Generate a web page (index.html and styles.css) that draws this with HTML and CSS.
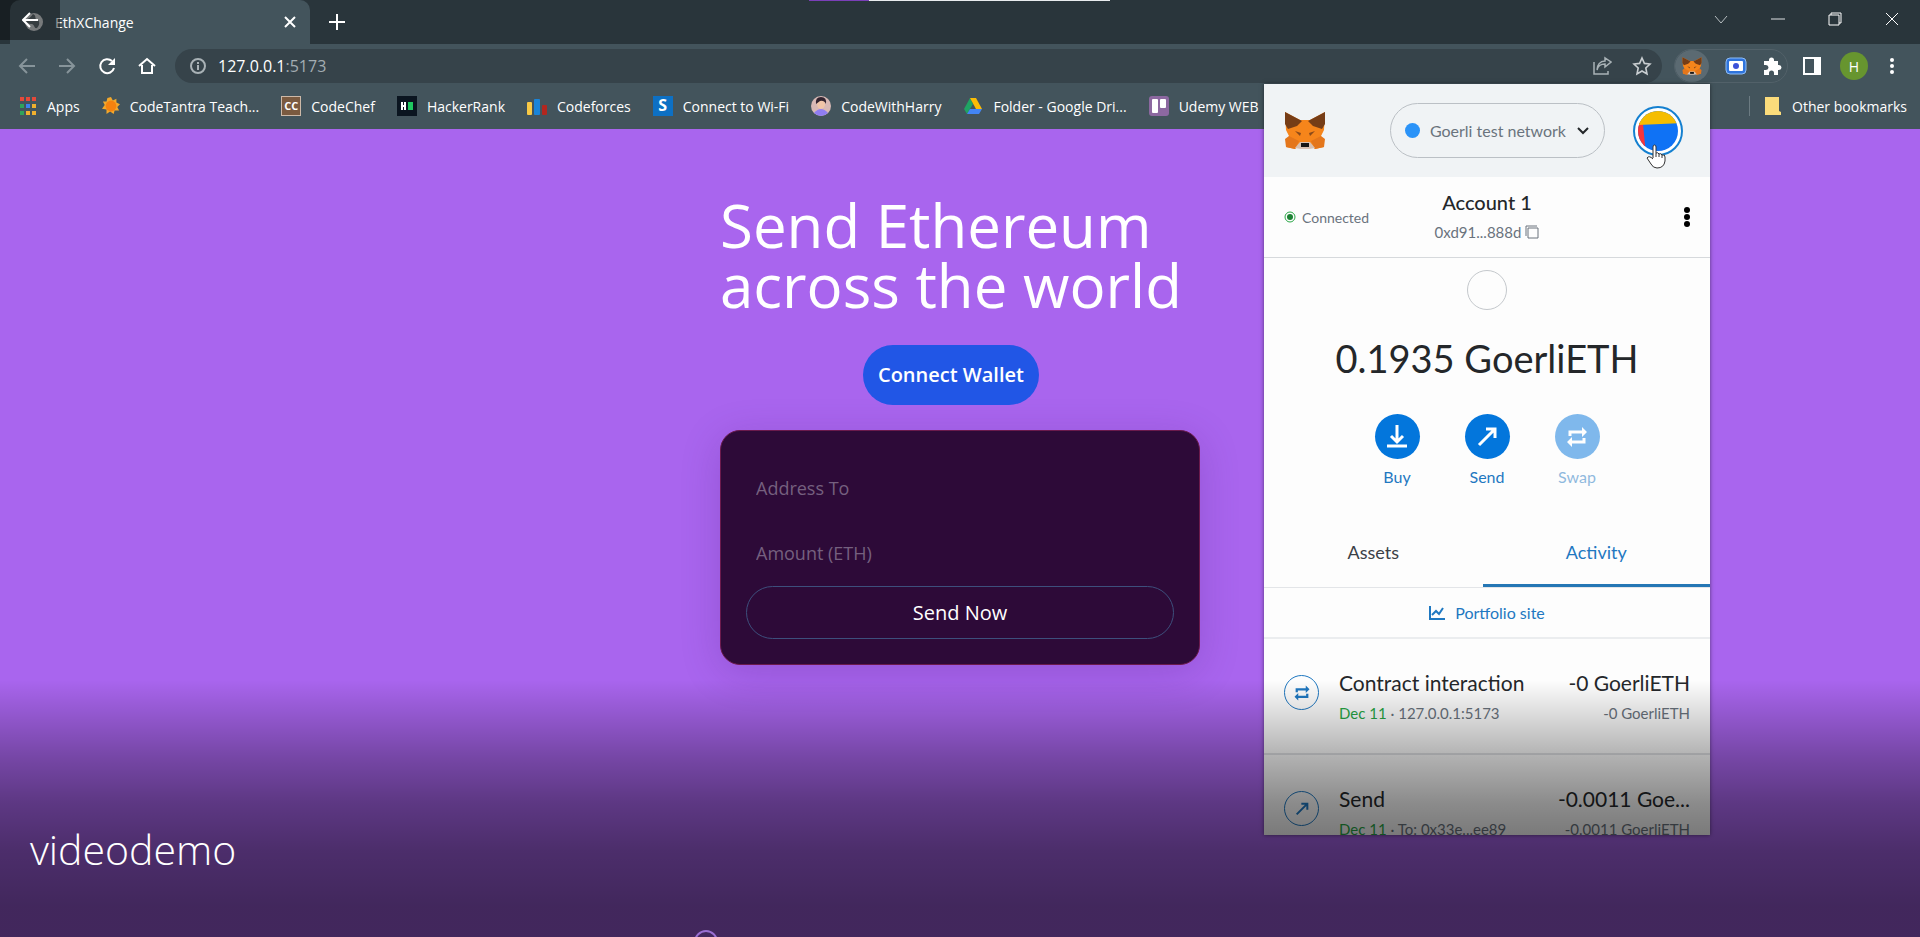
FILE: index.html
```html
<!DOCTYPE html>
<html lang="en">
<head>
  <meta charset="UTF-8">
  <title>EthXChange</title>
  <link rel="stylesheet" href="styles.css">
</head>
<body>

<!-- shared icons -->
<svg class="defs" aria-hidden="true">
  <symbol id="fox" viewBox="0 0 42 39">
    <path d="M1 1 16 9H26L41 1 40 19 37 25 40 36 31 38 26 34H16L11 38 2 36 5 25 2 19Z" fill="#f6851b"/>
    <path d="M1 1 18 10 13 15 4 18 1 13ZM41 1 24 10 29 15 38 18 41 13Z" fill="#763d16"/>
    <path d="M5 25 1 28 2 36 11 38 15 30ZM37 25 41 28 40 36 31 38 27 30Z" fill="#e4761b"/>
    <path d="M11 20 17 22 16 25ZM31 20 25 22 26 25Z" fill="#8a4a1a"/>
    <path d="M11 37 16 31H26L31 37 25 38H17Z" fill="#d7c1b3"/>
    <path d="M17 32H25V36H17Z" fill="#161616"/>
  </symbol>
  <symbol id="swap" viewBox="0 0 24 24">
    <path d="M5 11V7H18M19 13V17H6" fill="none" stroke="currentColor" stroke-width="3"/>
    <path d="M17 2 22 7 17 12ZM7 12 2 17 7 22Z" fill="currentColor"/>
  </symbol>
  <symbol id="send" viewBox="0 0 24 24">
    <path d="M4 20 19 5M11 4H20V13" fill="none" stroke="currentColor" stroke-width="3"/>
  </symbol>
</svg>

<div class="titlebar">
  <div class="tab">
    <svg class="favicon" viewBox="0 0 20 20"><circle cx="10" cy="10" r="9" fill="#c7cbce"/><path d="M9 2C13 4 10 6 13 8 16 8 16 13 13 16 10 17 11 13 8 12 4 12 2 10 2 8 5 6 7 5 9 2Z" fill="#5a666c"/></svg>
    <span>EthXChange</span>
    <button class="icon-btn tab-close" aria-label="Close tab"><svg width="12" height="12" viewBox="0 0 12 12"><path d="M1 1 11 11M11 1 1 11" stroke="#fff" stroke-width="2"/></svg></button>
  </div>
  <button class="icon-btn new-tab" aria-label="New tab"><svg width="16" height="16" viewBox="0 0 16 16"><path d="M8 0V16M0 8H16" stroke="#fff" stroke-width="2"/></svg></button>
  <div class="window-controls">
    <button class="icon-btn" aria-label="Search tabs"><svg width="14" height="14" viewBox="0 0 14 14"><path d="M1 4 7 11 13 4" fill="none" stroke="#b8bfc2" stroke-width="1"/></svg></button>
    <button class="icon-btn" aria-label="Minimize"><svg width="14" height="14" viewBox="0 0 14 14"><path d="M0 7H14" stroke="#dfe2e4"/></svg></button>
    <button class="icon-btn" aria-label="Restore"><svg width="14" height="14" viewBox="0 0 14 14"><path d="M1 3H11V13H1ZM3 3V1H13V11H11" fill="none" stroke="#fff"/></svg></button>
    <button class="icon-btn" aria-label="Close"><svg width="14" height="14" viewBox="0 0 14 14"><path d="M1 1 13 13M13 1 1 13" stroke="#fff"/></svg></button>
  </div>
</div>

<div class="toolbar">
  <div class="nav-buttons">
    <button class="icon-btn dim" aria-label="Back"><svg width="18" height="18" viewBox="0 0 18 18"><path d="M17 9H2M9 2 2 9 9 16" fill="none" stroke="currentColor" stroke-width="2"/></svg></button>
    <button class="icon-btn dim" aria-label="Forward"><svg width="18" height="18" viewBox="0 0 18 18"><path d="M1 9H16M9 2 16 9 9 16" fill="none" stroke="currentColor" stroke-width="2"/></svg></button>
    <button class="icon-btn" aria-label="Reload"><svg width="18" height="18" viewBox="0 0 18 18"><path d="M16 11A7 7 0 1 1 14 4" fill="none" stroke="currentColor" stroke-width="2"/><path d="M17 1V8H10Z" fill="currentColor"/></svg></button>
    <button class="icon-btn" aria-label="Home"><svg width="18" height="18" viewBox="0 0 18 18"><path d="M1 9 9 2 17 9M4 8V16H14V8" fill="none" stroke="currentColor" stroke-width="2"/></svg></button>
  </div>
  <div class="omnibox">
    <svg width="18" height="18" viewBox="0 0 18 18"><circle cx="9" cy="9" r="7" fill="none" stroke="#a9b2b6" stroke-width="2"/><path d="M9 8V13M9 5V7" stroke="#a9b2b6" stroke-width="2"/></svg>
    <span class="url">127.0.0.1<span>:5173</span></span>
    <button class="icon-btn share" aria-label="Share"><svg width="20" height="20" viewBox="0 0 20 20"><path d="M2 6V18H16V15M5 14C6 9 9 8 13 8V11L19 6 13 2V5C8 5 5 9 5 14Z" fill="none" stroke="#a9b2b6" stroke-width="1.5"/></svg></button>
    <button class="icon-btn" aria-label="Bookmark"><svg width="20" height="20" viewBox="0 0 20 20"><path d="M10 2 12.4 7.4 18 8 13.8 12 15 18 10 15 5 18 6.2 12 2 8 7.6 7.4Z" fill="none" stroke="#c9ced1" stroke-width="1.6"/></svg></button>
  </div>
  <div class="extensions">
    <button class="icon-btn active" aria-label="MetaMask"><svg width="20" height="20"><use href="#fox"/></svg></button>
    <button class="icon-btn" aria-label="Recorder"><svg width="22" height="18" viewBox="0 0 22 18"><rect x="1" y="1" width="20" height="16" rx="4" fill="#2f74dc" stroke="#8ebcf5"/><rect x="4" y="4" width="14" height="10" rx="1" fill="#fff"/><circle cx="11" cy="9" r="3" fill="#3c52d8"/></svg></button>
    <button class="icon-btn" aria-label="Extensions"><svg width="20" height="20" viewBox="0 0 20 20"><path d="M2 5H7V4A2.5 2.5 0 0 1 12 4V5H16V9H17A2.5 2.5 0 0 1 17 14H16V19H12V17A2 2 0 0 0 7 17V19H2V14H4A2 2 0 0 0 4 9H2Z" fill="#fff"/></svg></button>
  </div>
  <button class="icon-btn side-panel" aria-label="Side panel"><svg width="18" height="18" viewBox="0 0 18 18"><rect x="1" y="1" width="16" height="16" fill="none" stroke="#fff" stroke-width="2"/><path d="M11 1H17V17H11Z" fill="#fff"/></svg></button>
  <button class="profile" aria-label="Profile">H</button>
  <button class="icon-btn" aria-label="Menu"><svg width="18" height="18" viewBox="0 0 18 18"><circle cx="9" cy="3" r="2" fill="#fff"/><circle cx="9" cy="9" r="2" fill="#fff"/><circle cx="9" cy="15" r="2" fill="#fff"/></svg></button>
</div>

<nav class="bookmarks">
  <a href="#"><svg width="18" height="20" viewBox="0 0 18 20"><path d="M1 1H5V5H1ZM7 1H11V5H7ZM13 1H17V5H13Z" fill="#e5493a"/><path d="M1 8H5V12H1ZM1 15H5V19H1Z" fill="#2fa35b"/><path d="M7 8H11V12H7Z" fill="#3b82f0"/><path d="M13 8H17V12H13ZM7 15H11V19H7ZM13 15H17V19H13Z" fill="#f0b02e"/></svg>Apps</a>
  <a href="#"><svg width="18" height="20" viewBox="0 0 20 20"><path d="M10 0 12 4 16 2 16 6 20 8 17 11 19 15 14 15 13 19 9 16 5 19 5 14 0 13 3 9 1 5 5 5 6 1Z" fill="#f3a82b"/><circle cx="10" cy="10" r="6" fill="#f5820f"/></svg>CodeTantra Teach...</a>
  <a href="#"><span class="mark mark-cc">CC</span>CodeChef</a>
  <a href="#"><svg width="20" height="20" viewBox="0 0 20 20"><path d="M0 0H20V20H0Z" fill="#0b1520"/><path d="M5 6V14M8 6V14M5 10H8" stroke="#fff" stroke-width="2"/><path d="M11 6H16V14H11Z" fill="#1ec860"/></svg>HackerRank</a>
  <a href="#"><svg width="20" height="20" viewBox="0 0 20 20"><rect y="6" width="5" height="13" rx="1" fill="#f9c945"/><rect x="7" y="3" width="6" height="16" rx="1" fill="#1a84d8"/><rect x="15" y="9" width="5" height="10" rx="1" fill="#b3261e"/></svg>Codeforces</a>
  <a href="#"><span class="mark mark-s">S</span>Connect to Wi-Fi</a>
  <a href="#"><svg width="20" height="20" viewBox="0 0 20 20"><circle cx="10" cy="10" r="10" fill="#d8b9b5"/><path d="M3 17Q10 9 17 17 10 23 3 17Z" fill="#8f7df2"/><ellipse cx="10" cy="8" rx="4" ry="5" fill="#f0c5a8"/><path d="M5 8Q4 1 10 1 16 1 15 8 13 4 9 5Z" fill="#332430"/></svg>CodeWithHarry</a>
  <a href="#"><svg width="20" height="20" viewBox="0 0 20 20"><path d="M7 2 10 8 4 18 1 13Z" fill="#1fa463"/><path d="M7 2H13L19 13H13Z" fill="#fbbc05"/><path d="M7 13H19L16 18H4Z" fill="#4385f5"/></svg>Folder - Google Dri...</a>
  <a href="#"><svg width="20" height="20" viewBox="0 0 20 20"><rect width="20" height="20" rx="3" fill="#8c68a0"/><rect x="3" y="3" width="6" height="14" rx="1" fill="#fff"/><rect x="11" y="3" width="6" height="9" rx="1" fill="#fff"/></svg>Udemy WEB</a>
  <a href="#" class="other"><svg width="18" height="20" viewBox="0 0 18 20"><path d="M1 1H15V15L17 16V19H1Z" fill="#fbdc7b"/></svg>Other bookmarks</a>
</nav>

<main class="page">
  <div class="column">
    <div class="hero">
      <h1>Send Ethereum<br>across the world</h1>
      <button class="connect">Connect Wallet</button>
    </div>
    <form class="transfer">
      <input type="text" placeholder="Address To" aria-label="Address To">
      <input type="text" placeholder="Amount (ETH)" aria-label="Amount (ETH)">
      <button type="button">Send Now</button>
    </form>
  </div>
</main>

<section class="wallet">
  <header class="wallet-header">
    <svg width="42" height="39"><use href="#fox"/></svg>
    <button class="network"><i class="dot"></i>Goerli test network<svg width="14" height="10" viewBox="0 0 14 10"><path d="M2 2 7 7 12 2" fill="none" stroke="#24272a" stroke-width="2"/></svg></button>
    <button class="avatar" aria-label="My accounts">
      <svg width="50" height="50" viewBox="0 0 50 50">
        <clipPath id="face"><circle cx="25" cy="25" r="20"/></clipPath>
        <circle cx="25" cy="25" r="24" fill="#fff" stroke="#1580d0" stroke-width="2"/>
        <g clip-path="url(#face)"><path d="M0 0H50V50H0Z" fill="#0f72f5"/><path d="M4 12 10 18 13 50H0Z" fill="#f8353a"/><path d="M4 0H50V17L4 19Z" fill="#f5bd00"/></g>
      </svg>
      <svg class="pointer" width="20" height="25" viewBox="0 0 20 25"><path d="M7 14V3Q7 1 8.500 1T10 3V9Q12 8 13 10 15 9 16 11 19 10 19 13V17Q18 24 11 24 7 24 5 20L1 14Q3 11 7 15" fill="#fff" stroke="#333"/><path d="M10 9V13M13 10V13M16 11V14" stroke="#333"/></svg>
    </button>
  </header>

  <div class="account">
    <span class="status"><svg width="12" height="12" viewBox="0 0 12 12"><circle cx="6" cy="6" r="5" fill="none" stroke="#28a745"/><circle cx="6" cy="6" r="3" fill="#1c8234"/></svg>Connected</span>
    <div class="account-id">
      <h2>Account 1</h2>
      <button class="address">0xd91...888d<svg width="14" height="14" viewBox="0 0 14 14"><path d="M1 11V1H12M3 3H13V13H3Z" fill="none" stroke="#6a737d"/></svg></button>
    </div>
    <button class="icon-btn options" aria-label="Account options"><svg width="6" height="20" viewBox="0 0 6 20"><circle cx="3" cy="3" r="3"/><circle cx="3" cy="10" r="3"/><circle cx="3" cy="17" r="3"/></svg></button>
  </div>

  <div class="balance">
    <i class="token"></i>
    <strong>0.1935 GoerliETH</strong>
    <div class="actions">
      <button><span><svg width="24" height="24" viewBox="0 0 24 24"><path d="M12 0V16M6 11 12 17 18 11M2 21H22" fill="none" stroke="#fff" stroke-width="3"/></svg></span>Buy</button>
      <button><span><svg width="24" height="24"><use href="#send"/></svg></span>Send</button>
      <button disabled><span><svg width="24" height="24"><use href="#swap"/></svg></span>Swap</button>
    </div>
  </div>

  <div class="tabs">
    <button>Assets</button>
    <button class="selected">Activity</button>
  </div>
  <a href="#" class="portfolio"><svg width="16" height="14" viewBox="0 0 16 14"><path d="M1 0V13H16M3 9 7 5 10 8 14 2" fill="none" stroke="#1f78c1" stroke-width="2"/></svg>Portfolio site</a>

  <ul class="activity">
    <li>
      <span class="badge"><svg width="18" height="18"><use href="#swap"/></svg></span>
      <div class="what"><h3>Contract interaction</h3><p><em>Dec 11</em> · 127.0.0.1:5173</p></div>
      <div class="amount"><h3>-0 GoerliETH</h3><p>-0 GoerliETH</p></div>
    </li>
    <li>
      <span class="badge"><svg width="16" height="16"><use href="#send"/></svg></span>
      <div class="what"><h3>Send</h3><p><em>Dec 11</em> · To: 0x33e...ee89</p></div>
      <div class="amount"><h3>-0.0011 Goe...</h3><p>-0.0011 GoerliETH</p></div>
    </li>
  </ul>
</section>

<!-- player controls over the video -->
<div class="player">
  <div class="player-back"><svg width="16" height="16" viewBox="0 0 16 16"><path d="M16 8H1M8 1 1 8 8 15" fill="none" stroke="#fff" stroke-width="2"/></svg></div>
  <div class="player-line"></div>
  <div class="player-shade"></div>
  <p class="player-title">videodemo</p>
  <div class="player-knob"></div>
</div>

</body>
</html>
```
FILE: styles.css
```css
* {
  box-sizing: border-box;
}
body {
  margin: 0;
  position: relative;
  min-height: 100vh;
  display: flex;
  flex-direction: column;
  overflow: hidden;
  background: #a965ee;
  color: #fff;
  font-family: "Open Sans", "Noto Sans", sans-serif;
}
button, input {
  font-family: inherit;
}
button {
  cursor: pointer;
}
a {
  text-decoration: none;
}
h1, h2, h3, p, ul {
  margin: 0;
  padding: 0;
}
svg {
  display: block;
  flex: none;
}
.defs {
  position: absolute;
  width: 0;
  height: 0;
}
.icon-btn {
  display: flex;
  align-items: center;
  justify-content: center;
  padding: 0;
  border: none;
  background: none;
  color: #fff;
}
.icon-btn.dim {
  color: #87949a;
}

/* browser window */
.titlebar {
  display: flex;
  height: 44px;
  background: #29353b;
}
.tab {
  display: flex;
  align-items: center;
  width: 300px;
  margin-left: 10px;
  padding: 0 14px;
  border-radius: 10px 10px 0 0;
  background: #43545c;
  font-size: 14px;
}
.favicon {
  width: 20px;
  height: 20px;
  margin-right: 11px;
}
.tab-close {
  margin-left: auto;
}
.new-tab {
  width: 54px;
}
.window-controls {
  display: flex;
  height: 38px;
  margin-left: auto;
}
.window-controls .icon-btn {
  width: 57px;
}
.toolbar {
  display: flex;
  align-items: center;
  gap: 12px;
  height: 44px;
  padding: 0 19px 0 18px;
  background: #43545c;
}
.nav-buttons {
  display: flex;
  gap: 22px;
  margin-right: 7px;
}
.omnibox {
  flex: 1;
  display: flex;
  align-items: center;
  gap: 11px;
  height: 34px;
  padding: 0 10px 0 14px;
  border-radius: 17px;
  background: #36434a;
  font-size: 16px;
}
.url span {
  color: #a3adb2;
}
.share {
  margin-left: auto;
  margin-right: 9px;
}
.extensions {
  display: flex;
  justify-content: space-between;
  width: 114px;
  height: 34px;
  padding-right: 5px;
  border: 1px solid #526169;
  border-radius: 17px;
}
.extensions .active {
  width: 34px;
  border-radius: 50%;
  background: #5b6a72;
}
.side-panel {
  margin-left: 3px;
}
.profile {
  width: 28px;
  height: 28px;
  margin: 0 3px 0 7px;
  padding: 0;
  border: none;
  border-radius: 50%;
  background: #67952f;
  color: #fff;
  font-size: 14px;
}
.bookmarks {
  display: flex;
  align-items: center;
  gap: 22px;
  height: 41px;
  padding: 0 13px 5px 19px;
  background: #43545c;
  font-size: 14px;
  white-space: nowrap;
}
.bookmarks a {
  display: flex;
  align-items: center;
  gap: 10px;
  color: #fff;
}
.mark {
  width: 20px;
  height: 20px;
  line-height: 18px;
  text-align: center;
  font-weight: bold;
}
.mark-cc {
  border: 1px solid #cdb9a8;
  background: #7a5a40;
  font-size: 11px;
}
.mark-s {
  background: #0d70c4;
  font-size: 16px;
}
.bookmarks .other {
  margin-left: auto;
  padding-left: 14px;
  border-left: 1px solid #6c7b82;
}

/* page */
.page {
  flex: 1;
  display: flex;
  justify-content: center;
  padding-top: 66px;
}
.column {
  width: 480px;
}
.hero {
  display: flex;
  flex-direction: column;
  align-items: center;
  width: fit-content;
}
h1 {
  font-size: 60px;
  line-height: 60px;
  font-weight: 400;
}
.connect {
  height: 60px;
  margin: 30px 0 25px;
  padding: 0 15px 2px;
  border: none;
  border-radius: 30px;
  background: #2156e6;
  color: #fff;
  font-size: 20px;
  font-weight: 600;
}
.transfer {
  display: flex;
  flex-direction: column;
  padding: 25px;
  border: 1px solid #6b1a4c;
  border-radius: 20px;
  background: #2d0a38;
  box-shadow: 0 8px 40px rgba(60, 20, 110, 0.2);
}
.transfer input {
  height: 65px;
  padding: 0 10px 2px;
  border: none;
  outline: none;
  background: none;
  color: #fff;
  font-size: 18px;
}
.transfer input::placeholder {
  color: #75607f;
}
.transfer button {
  height: 53px;
  border: 1px solid #3d4f7c;
  border-radius: 27px;
  background: none;
  color: #fff;
  font-size: 20px;
}

/* wallet popup */
.wallet {
  position: absolute;
  top: 84px;
  right: 210px;
  bottom: 102px;
  width: 446px;
  overflow: hidden;
  background: #fdfdfd;
  color: #24272a;
  font-family: Lato, sans-serif;
  box-shadow: 0 0 4px rgba(0, 0, 0, 0.5);
}
.wallet button {
  border: none;
  background: none;
  padding: 0;
}
.wallet-header {
  display: flex;
  align-items: center;
  height: 93px;
  padding: 0 27px 0 20px;
  background: #f0f3f5;
}
.wallet .network {
  display: flex;
  align-items: center;
  gap: 10px;
  height: 55px;
  margin: 0 28px 0 auto;
  padding: 0 14px;
  border: 1px solid #bbc0c5;
  border-radius: 28px;
  color: #6a737d;
  font-size: 16px;
}
.dot {
  width: 15px;
  height: 15px;
  border-radius: 50%;
  background: #2b93f8;
}
.avatar {
  position: relative;
}
.pointer {
  position: absolute;
  top: 38px;
  left: 13px;
}
.account {
  display: grid;
  grid-template-columns: 1fr auto 1fr;
  align-items: center;
  height: 81px;
  padding: 0 20px;
  border-bottom: 1px solid #d6d9dc;
}
.status {
  display: flex;
  align-items: center;
  gap: 6px;
  color: #6a737d;
  font-size: 14px;
}
.account-id {
  text-align: center;
}
h2 {
  font-size: 20px;
  line-height: 30px;
  font-weight: 500;
}
.address {
  display: flex;
  align-items: center;
  gap: 4px;
  line-height: 30px;
  color: #6a737d;
  font-size: 15px;
}
.wallet .options {
  justify-self: end;
}
.balance {
  display: flex;
  flex-direction: column;
  align-items: center;
  height: 262px;
  padding-top: 12px;
}
.token {
  width: 40px;
  height: 40px;
  border: 1px solid #c4c8cc;
  border-radius: 50%;
}
.balance strong {
  margin: 24px 0 32px;
  font-size: 38px;
  line-height: 48px;
  font-weight: 400;
}
.actions {
  display: flex;
}
.actions button {
  width: 90px;
  color: #1f78c1;
  font-size: 16px;
}
.actions span {
  display: flex;
  align-items: center;
  justify-content: center;
  width: 45px;
  height: 45px;
  margin: 0 auto 8px;
  border-radius: 50%;
  background: #0376dc;
  color: #fff;
}
.actions button:disabled {
  opacity: 0.5;
}
.tabs {
  display: grid;
  grid-template-columns: 49% 51%;
  height: 68px;
  border-bottom: 1px solid #e3e5e8;
}
.wallet .tabs button {
  border-bottom: 3px solid transparent;
  color: #3b4046;
  font-size: 18px;
}
.wallet .tabs .selected {
  border-color: #2577b5;
  color: #1f78c1;
}
.portfolio {
  display: flex;
  align-items: center;
  justify-content: center;
  gap: 10px;
  height: 51px;
  border-bottom: 2px solid #ebedef;
  color: #1f78c1;
  font-size: 16px;
}
.activity {
  list-style: none;
}
.activity li {
  display: flex;
  height: 116px;
  padding: 28px 20px 0;
  border-bottom: 2px solid #e0e2e5;
}
.badge {
  display: flex;
  align-items: center;
  justify-content: center;
  width: 35px;
  height: 35px;
  margin-top: 8px;
  border: 1px solid #1f78c1;
  border-radius: 50%;
  color: #1f78c1;
}
.what {
  flex: 1;
  margin-left: 20px;
}
.amount {
  text-align: right;
}
.activity h3 {
  font-size: 21px;
  line-height: 32px;
  font-weight: 400;
}
.activity p {
  font-size: 15px;
  line-height: 28px;
  color: #6a737d;
}
.activity em {
  color: #28a745;
  font-style: normal;
}

/* player overlay */
.player {
  position: absolute;
  inset: 0;
  overflow: hidden;
  pointer-events: none;
}
.player-back {
  position: absolute;
  top: 0;
  left: 0;
  width: 60px;
  height: 40px;
  padding: 12px 22px;
  background: rgba(0, 0, 0, 0.4);
}
.player-line {
  position: absolute;
  top: 0;
  left: 809px;
  width: 301px;
  height: 1px;
  background: linear-gradient(to right, #7a3fb8 20%, #e8ecee 20%);
}
.player-shade {
  position: absolute;
  left: 0;
  right: 0;
  bottom: 0;
  height: 257px;
  background: linear-gradient(rgba(0, 0, 0, 0), rgba(0, 0, 0, 0.3) 30%, rgba(0, 0, 0, 0.45) 48%, rgba(0, 0, 0, 0.55) 66%, rgba(0, 0, 0, 0.61) 88%);
}
.player-title {
  position: absolute;
  left: 30px;
  bottom: 60px;
  font-size: 41px;
  line-height: 56px;
  font-weight: 300;
}
.player-knob {
  position: absolute;
  left: 694px;
  bottom: -17px;
  width: 24px;
  height: 24px;
  border: 2px solid #9a6fd2;
  border-radius: 50%;
}
```
